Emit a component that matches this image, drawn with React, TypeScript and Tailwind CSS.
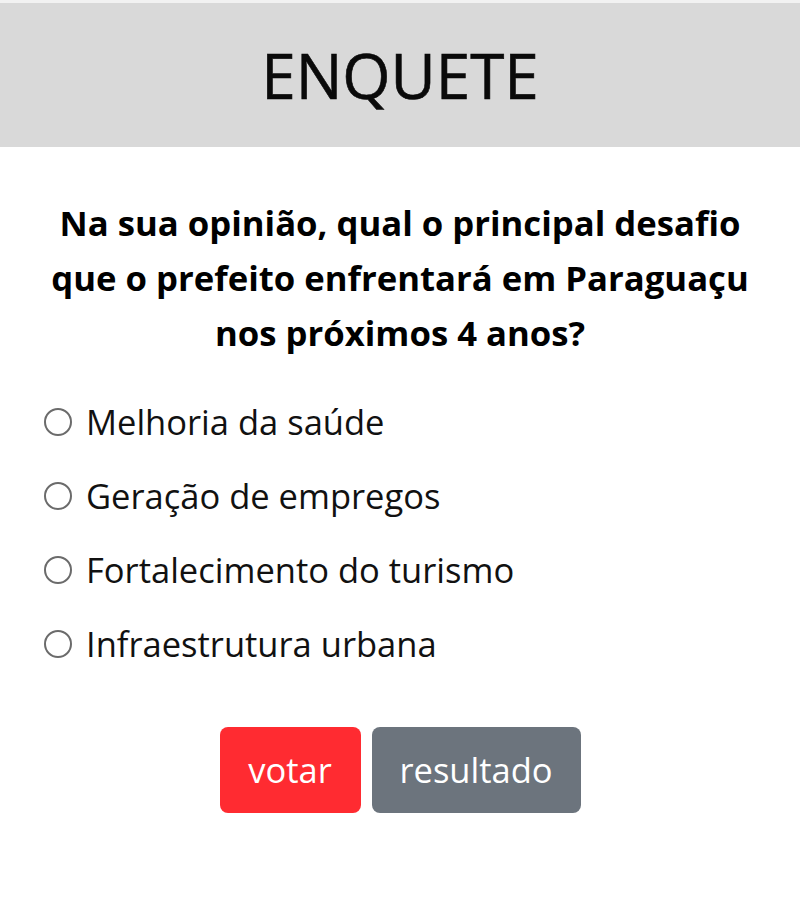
import React, { useState } from 'react';

const options = [
  'Melhoria da saúde',
  'Geração de empregos',
  'Fortalecimento do turismo',
  'Infraestrutura urbana',
];

const App: React.FC = () => {
  const [selected, setSelected] = useState<number | null>(null);

  return (
    <div className="w-[800px] h-[915px] bg-white font-['Open_Sans',sans-serif] text-black">
      {/* Header */}
      <div className="border-t-[3px] border-[#f2f2f2] bg-[#d9d9d9] h-[147px] flex items-center justify-center">
        <h1 className="text-[62px] leading-none text-[#0a0a0a] [-webkit-text-stroke:0.6px_#0a0a0a]">ENQUETE</h1>
      </div>

      {/* Question */}
      <div className="px-8 pt-[48px] text-center">
        <p className="text-[34.7px] font-bold leading-[55px]">
          Na sua opinião, qual o principal desafio
          <br />
          que o prefeito enfrentará em Paraguaçu
          <br />
          nos próximos 4 anos?
        </p>
      </div>

      {/* Options */}
      <div className="pl-[44px] pt-[34px] flex flex-col gap-[18px]">
        {options.map((opt, i) => (
          <label key={i} className="flex items-center gap-[14px] h-[56px] cursor-pointer">
            <span
              onClick={() => setSelected(i)}
              className="w-[28px] h-[28px] rounded-full border-2 border-[#6b6b6b] flex items-center justify-center shrink-0"
            >
              {selected === i && <span className="w-[13px] h-[13px] rounded-full bg-[#333]" />}
            </span>
            <span className="text-[34.5px] text-[#111]">{opt}</span>
          </label>
        ))}
      </div>

      {/* Buttons */}
      <div className="flex justify-center gap-[11px] pt-[55px]">
        <button className="w-[141px] h-[86px] rounded-[8px] bg-[#ff2b31] text-white text-[34.5px]">
          votar
        </button>
        <button className="w-[209px] h-[86px] rounded-[8px] bg-[#6c747d] text-white text-[34.5px]">
          resultado
        </button>
      </div>
    </div>
  );
};

export default App;
